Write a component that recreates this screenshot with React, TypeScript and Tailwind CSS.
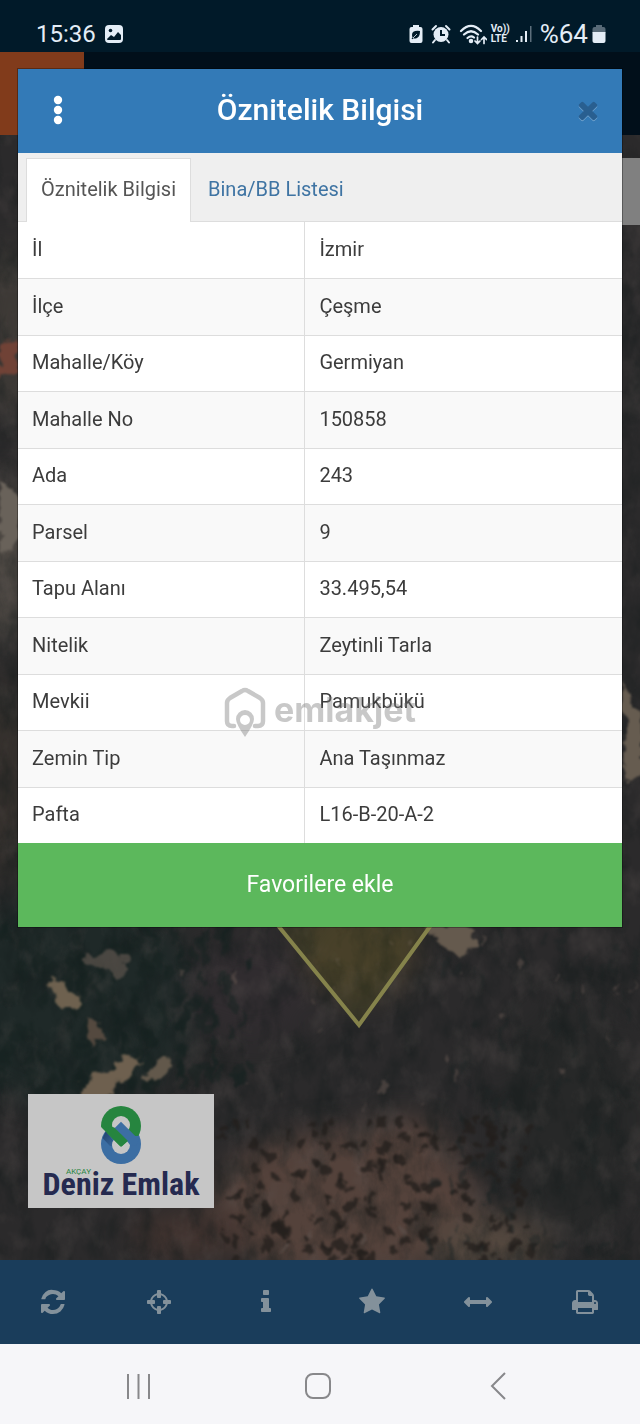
import type { ReactNode } from 'react';

interface Attribute {
  label: string;
  value: string;
}

const attributes: Attribute[] = [
  { label: 'İl', value: 'İzmir' },
  { label: 'İlçe', value: 'Çeşme' },
  { label: 'Mahalle/Köy', value: 'Germiyan' },
  { label: 'Mahalle No', value: '150858' },
  { label: 'Ada', value: '243' },
  { label: 'Parsel', value: '9' },
  { label: 'Tapu Alanı', value: '33.495,54' },
  { label: 'Nitelik', value: 'Zeytinli Tarla' },
  { label: 'Mevkii', value: 'Pamukbükü' },
  { label: 'Zemin Tip', value: 'Ana Taşınmaz' },
  { label: 'Pafta', value: 'L16-B-20-A-2' },
];

const closePath =
  'M1490 1322q0 40-28 68l-136 136q-28 28-68 28t-68-28l-294-294-294 294q-28 28-68 28t-68-28l-136-136q-28-28-28-68t28-68l294-294-294-294q-28-28-28-68t28-68l136-136q28-28 68-28t68 28l294 294 294-294q28-28 68-28t68 28l136 136q28 28 28 68t-28 68l-294 294 294 294q28 28 28 68z';

const tools = [
  {
    name: 'Yenile',
    path: 'M1639 1056q0 5-1 7-64 268-268 434.5T892 1664q-146 0-282.5-55T366 1452l-129 129q-19 19-45 19t-45-19-19-45v-448q0-26 19-45t45-19h448q26 0 45 19t19 45-19 45l-137 137q71 66 161 102t187 36q134 0 250-65t186-179q11-17 53-117 8-23 30-23h192q13 0 22.5 9.5t9.5 22.5zm25-800v448q0 26-19 45t-45 19h-448q-26 0-45-19t-19-45 19-45l138-138q-148-137-349-137-134 0-250 65T461 583q-11 17-53 117-8 23-30 23H179q-13 0-22.5-9.5T147 691v-7q65-268 270-434.5T897 128q146 0 284 55.5T1425 340l130-129q19-19 45-19t45 19 19 45z',
  },
  {
    name: 'Konumum',
    path: 'M1325 1024h-109q-26 0-45-19t-19-45V832q0-26 19-45t45-19h109q-32-108-112.5-188.5T1024 467v109q0 26-19 45t-45 19H832q-26 0-45-19t-19-45V467q-108 32-188.5 112.5T467 768h109q26 0 45 19t19 45v128q0 26-19 45t-45 19H467q32 108 112.5 188.5T768 1325v-109q0-26 19-45t45-19h128q26 0 45 19t19 45v109q108-32 188.5-112.5T1325 1024zm339-192v128q0 26-19 45t-45 19h-143q-37 161-154.5 278.5T1024 1457v143q0 26-19 45t-45 19H832q-26 0-45-19t-19-45v-143q-161-37-278.5-154.5T335 1024H192q-26 0-45-19t-19-45V832q0-26 19-45t45-19h143q37-161 154.5-278.5T768 335V192q0-26 19-45t45-19h128q26 0 45 19t19 45v143q161 37 278.5 154.5T1457 768h143q26 0 45 19t19 45z',
  },
  {
    name: 'Bilgi',
    path: 'M1216 1344v128q0 26-19 45t-45 19H640q-26 0-45-19t-19-45v-128q0-26 19-45t45-19h64V896h-64q-26 0-45-19t-19-45V704q0-26 19-45t45-19h384q26 0 45 19t19 45v576h64q26 0 45 19t19 45zm-128-1152v192q0 26-19 45t-45 19H768q-26 0-45-19t-19-45V192q0-26 19-45t45-19h256q26 0 45 19t19 45z',
  },
  {
    name: 'Favoriler',
    path: 'M1728 647q0 22-26 48l-363 354 86 500q1 7 1 20 0 21-10.5 35.5T1385 1619q-19 0-40-12l-449-236-449 236q-22 12-40 12-21 0-31.5-14.5T365 1569q0-6 2-20l86-500L89 695q-25-27-25-48 0-37 56-46l502-73L847 73q19-41 49-41t49 41l225 455 502 73q56 9 56 46z',
  },
  {
    name: 'Ölç',
    path: 'M1792 896q0 26-19 45l-256 256q-19 19-45 19t-45-19-19-45v-128H384v128q0 26-19 45t-45 19-45-19L19 941Q0 922 0 896t19-45l256-256q19-19 45-19t45 19 19 45v128h1024V640q0-26 19-45t45-19 45 19l256 256q19 19 19 45z',
  },
  {
    name: 'Yazdır',
    path: 'M448 1536h896v-256H448v256zm0-640h896V512h-160q-40 0-68-28t-28-68V256H448v640zm1152 64q0-26-19-45t-45-19-45 19-19 45 19 45 45 19 45-19 19-45zm128 0v416q0 13-9.5 22.5t-22.5 9.5h-224v160q0 40-28 68t-68 28H416q-40 0-68-28t-28-68v-160H96q-13 0-22.5-9.5T64 1376V960q0-79 56.5-135.5T256 768h64V224q0-40 28-68t68-28h672q40 0 88 20t76 48l152 152q28 28 48 76t20 88v256h64q79 0 135.5 56.5T1728 960z',
  },
];

// Small seeded generator so the scrub lands in the same place on every render
function scatter(seed: number, count: number, x: number, y: number, w: number, h: number) {
  let s = seed;
  const next = () => {
    s = (s * 16807) % 2147483647;
    return s / 2147483647;
  };
  next();
  return Array.from({ length: count }, () => ({
    x: x + next() * w,
    y: y + next() * h,
    rx: 1 + next() * 4,
    ry: 1 + next() * 5,
  }));
}

const bushes = scatter(7143, 170, 222, 1115, 310, 150);
const trees = scatter(1951, 170, 0, 925, 250, 170);
const shade = scatter(4377, 90, 430, 925, 210, 335);
const stones = scatter(9241, 40, 170, 930, 470, 320);

function Icon({ path, className }: { path: string; className: string }) {
  return (
    <svg viewBox="0 0 1792 1792" className={className} fill="currentColor" aria-hidden="true">
      <path d={path} />
    </svg>
  );
}

function SatelliteMap() {
  return (
    <svg
      className="absolute inset-0 h-full w-full"
      viewBox="0 52 640 1208"
      preserveAspectRatio="xMidYMid slice"
      aria-hidden="true"
    >
      <defs>
        <filter id="rough" x="-10%" y="-10%" width="120%" height="120%" colorInterpolationFilters="sRGB">
          <feTurbulence type="fractalNoise" baseFrequency="0.06" numOctaves="4" seed="8" />
          <feDisplacementMap in="SourceGraphic" scale="18" xChannelSelector="R" yChannelSelector="G" />
          <feGaussianBlur stdDeviation="1" />
        </filter>
        <filter id="soft" x="-30%" y="-30%" width="160%" height="160%" colorInterpolationFilters="sRGB">
          <feGaussianBlur stdDeviation="14" />
        </filter>
        <filter id="grain" x="0" y="0" width="100%" height="100%" colorInterpolationFilters="sRGB">
          <feTurbulence type="fractalNoise" baseFrequency="0.04 0.028" numOctaves="5" seed="5" />
          <feColorMatrix values="0 0 0 0 0.36  0 0 0 0 0.33  0 0 0 0 0.32  1.6 0 0 0 -0.78" />
        </filter>
        <filter id="dark" x="0" y="0" width="100%" height="100%" colorInterpolationFilters="sRGB">
          <feTurbulence type="fractalNoise" baseFrequency="0.045 0.025" numOctaves="5" seed="14" />
          <feColorMatrix values="0 0 0 0 0.07  0 0 0 0 0.1  0 0 0 0 0.1  0 2.4 0 0 -1" />
        </filter>
      </defs>

      <rect x="0" y="52" width="640" height="1208" fill="#2b2a2b" />
      <g filter="url(#soft)">
        <ellipse cx="70" cy="1000" rx="130" ry="110" fill="#1f2928" />
        <ellipse cx="250" cy="990" rx="70" ry="50" fill="#302c2f" />
        <ellipse cx="360" cy="950" rx="60" ry="50" fill="#40382c" />
        <ellipse cx="345" cy="1205" rx="135" ry="75" fill="#54423b" />
        <ellipse cx="400" cy="1150" rx="50" ry="32" fill="#54423b" />
        <ellipse cx="190" cy="1235" rx="60" ry="25" fill="#41332f" />
        <ellipse cx="490" cy="1245" rx="60" ry="30" fill="#54483f" />
        <ellipse cx="570" cy="1120" rx="70" ry="120" fill="#272828" />
        <ellipse cx="10" cy="330" rx="25" ry="90" fill="#3f3b37" />
        <ellipse cx="5" cy="560" rx="20" ry="90" fill="#544e48" />
        <ellipse cx="5" cy="780" rx="22" ry="110" fill="#36312d" />
      </g>

      <rect x="0" y="52" width="640" height="1208" filter="url(#dark)" opacity="0.45" />
      <rect x="0" y="52" width="640" height="1208" filter="url(#grain)" opacity="0.45" />

      <g filter="url(#rough)">
        {trees.map((t, i) => (
          <ellipse key={i} cx={t.x} cy={t.y} rx={t.rx + 1} ry={t.ry + 5} fill="#15211f" opacity="0.5" />
        ))}
        <path d="M80 1090l12-16 20-4 12-14 20 4-10 14-18 8-2 14-18 6-16-8z" fill="#6e604f" />
        <path d="M144 1076l22-18 8 6-20 18z" fill="#62584b" />
        <path d="M48 982l18 2 4 12 12 4-2 8-18-2-8-12z" fill="#6e614f" />
        <path d="M84 952l18 4 6-6 18 8 2 18-10 4-12-10-18-6z" fill="#554f48" opacity="0.8" />
        <path d="M84 1018l16 4 4 18-14 4z" fill="#54493f" />
        <path d="M160 1108l10-14 20 8 2 18-18 8z" fill="#5d493e" />
        <path d="M428 926h46v20l-14 10-22-10z" fill="#655a4e" />
        <path d="M0 346l18-6v28l-20 14z" fill="#704236" />
        <path d="M0 480l20 14v44l-20 16z" fill="#69625a" />
        <path d="M622 680l8 20 14 14v60l-20 10z" fill="#665c50" />
        {bushes.map((b, i) => (
          <ellipse key={i} cx={b.x} cy={b.y} rx={b.rx + 1} ry={b.ry + 1} fill="#231f1c" opacity="0.75" />
        ))}
        {shade.map((b, i) => (
          <ellipse key={i} cx={b.x} cy={b.y} rx={b.rx} ry={b.ry * 2} fill="#1c2323" opacity="0.45" />
        ))}
        {stones.map((b, i) => (
          <ellipse key={i} cx={b.x} cy={b.y} rx={b.rx / 2} ry={b.ry} fill="#5c504b" opacity="0.6" />
        ))}
      </g>

      {/* Parcel outline */}
      <path
        d="M258 898L280 928L359 1025L452 896"
        fill="#6b641f"
        fillOpacity="0.2"
        stroke="#85834b"
        strokeWidth="4"
      />

      {/* App bar and map control behind the dialog */}
      <rect x="0" y="52" width="640" height="83" fill="#010f1a" />
      <rect x="0" y="52" width="84" height="83" fill="#813b1b" />
      <rect x="600" y="158" width="40" height="67" fill="#808080" />
    </svg>
  );
}

function StatusBar() {
  return (
    <header className="flex h-[52px] items-center justify-between bg-[#011a29] pt-4 pr-[34px] pl-9 text-[#e4edf6]">
      <div className="flex items-center gap-2">
        <span className="text-2xl">15:36</span>
        <svg viewBox="0 0 20 20" className="size-5" aria-hidden="true">
          <rect x="1" y="1" width="18" height="18" rx="4" fill="currentColor" />
          <circle cx="6.5" cy="6.5" r="1.8" fill="#011a29" />
          <path d="M3 15l4-4 3 2 4-5 3 3v4q0 1-1 1H4q-1 0-1-1z" fill="#011a29" />
        </svg>
      </div>

      <div className="flex items-center gap-2">
        <svg viewBox="0 0 14 20" className="h-5 w-3.5" aria-hidden="true">
          <path d="M4 1h6v2h1.500q2 0 2 2v12q0 2-2 2h-9q-2 0-2-2V5q0-2 2-2H4z" fill="currentColor" />
          <path d="M11 7q-8-1-8 4 0 1.500.6 2.400L2.500 14.500 3.500 15.300 4.600 14.200Q6 15 8 14q3-1.500 3-7z" fill="#011a29" />
          <path d="M4 14l4-4" stroke="currentColor" strokeWidth="0.8" />
        </svg>
        <svg viewBox="0 0 20 20" className="size-5" aria-hidden="true">
          <circle cx="10" cy="10.500" r="7.500" fill="currentColor" />
          <path d="M1.500 5.500L5 2M18.500 5.500L15 2M4 16l-2 2.500M16 16l2 2.500" stroke="currentColor" strokeWidth="2" strokeLinecap="round" />
          <path d="M10 6v5h4" stroke="#011a29" strokeWidth="2" fill="none" />
        </svg>
        <svg viewBox="0 0 28 21" className="h-[21px] w-7" fill="none" stroke="currentColor" strokeWidth="2.2" strokeLinecap="round" aria-hidden="true">
          <path d="M2 7Q12-3 22 7M5 10.500Q12 4 19 10.500M8.500 14Q12 11 15 13.500" />
          <circle cx="12" cy="17" r="1.200" fill="currentColor" />
          <path d="M18.500 13v6M16 17l2.500 2.500L21 17M25 19.500v-6M22.500 15.500l2.500-2.500 2.500 2.500" strokeWidth="1.700" />
        </svg>
        <div className="flex items-center gap-1.5">
          <span className="-ml-1 flex flex-col text-[10px] leading-[10px] font-bold">
            <span>Vo))</span>
            <span>LTE</span>
          </span>
          <svg viewBox="0 0 16 18" className="h-[18px] w-4" aria-hidden="true">
            <path d="M0 15h2v2H0zM4.500 11h2v6h-2zM9 6h2v11H9z" fill="currentColor" />
            <path d="M14 1h1.500v16H14z" fill="#5d6f7c" />
          </svg>
        </div>
        <span className="flex items-center gap-1 text-[26px]">
          %64
          <svg viewBox="0 0 14 20" className="h-5 w-3.5" aria-hidden="true">
            <path d="M4 1h6v2h1.500q2 0 2 2v4h-13V5q0-2 2-2H4z" fill="#586a77" />
            <path d="M.5 8h13v9q0 2-2 2h-9q-2 0-2-2z" fill="currentColor" />
          </svg>
        </span>
      </div>
    </header>
  );
}

function Watermark() {
  return (
    <div className="pointer-events-none absolute inset-x-0 bottom-[190px] flex items-center justify-center gap-2 text-[#777777] opacity-40">
      <svg viewBox="0 0 42 50" className="h-[50px] w-[42px]" fill="none" aria-hidden="true">
        <path
          d="M10 39H8q-5 0-5-5V16q0-3 3-5L18 4q3-2 6 0l12 7q3 2 3 5v18q0 5-5 5h-3"
          stroke="currentColor"
          strokeWidth="4.500"
          strokeLinecap="round"
        />
        <path
          fillRule="evenodd"
          d="M21 23a9 9 0 0 1 9 9q0 5-9 18q-9-13-9-18a9 9 0 0 1 9-9zm0 5a5 5 0 1 0 0 10a5 5 0 0 0 0-10z"
          fill="currentColor"
        />
      </svg>
      <span className="pb-1 font-['Inter',sans-serif] text-[34px] leading-10 font-bold">emlakjet</span>
    </div>
  );
}

function AttributeDialog() {
  return (
    <section
      role="dialog"
      aria-labelledby="dialog-title"
      className="relative mx-[18px] bg-white shadow-[0_0_0_1px_rgba(0,0,0,0.3)]"
    >
      <div className="flex h-[84px] items-center justify-between bg-[#337ab7] px-5 pb-0.5 text-white">
        <button type="button" aria-label="Menü" className="flex size-10 items-center justify-center">
          <svg viewBox="0 0 10 30" className="h-[30px] w-2.5" fill="currentColor" aria-hidden="true">
            <circle cx="5" cy="5" r="4.200" />
            <circle cx="5" cy="15" r="4.200" />
            <circle cx="5" cy="25" r="4.200" />
          </svg>
        </button>
        <h1 id="dialog-title" className="text-[30px] leading-9 font-medium">
          Öznitelik Bilgisi
        </h1>
        <button
          type="button"
          aria-label="Kapat"
          className="flex w-10 items-center justify-end text-[#295f90] drop-shadow-[0_1px_0_rgba(255,255,255,0.3)]"
        >
          <Icon path={closePath} className="size-7" />
        </button>
      </div>

      <div role="tablist" className="flex h-[69px] items-end border-b border-[#dddddd] bg-[#efefef] px-2 text-xl">
        <button
          type="button"
          role="tab"
          aria-selected="true"
          className="-mb-px h-16 border border-b-0 border-[#dddddd] bg-white px-3.5 pb-1 text-[#555555]"
        >
          Öznitelik Bilgisi
        </button>
        <button
          type="button"
          role="tab"
          aria-selected="false"
          className="-mb-px h-16 border border-b-0 border-transparent px-4 pb-1 text-[#3f74a3]"
        >
          Bina/BB Listesi
        </button>
      </div>

      <table className="w-full table-fixed border-collapse text-xl text-[#3c3c3c]">
        <colgroup>
          <col className="w-[47.5%]" />
          <col />
        </colgroup>
        <tbody>
          {attributes.map((item) => (
            <tr key={item.label} className="h-14 border-b border-[#dddddd] last:border-b-0 even:h-[57px] even:bg-[#f9f9f9]">
              <th scope="row" className="border-r border-[#dddddd] px-3.5 pb-0.5 text-left font-normal">
                {item.label}
              </th>
              <td className="px-3.5 pb-0.5">{item.value}</td>
            </tr>
          ))}
        </tbody>
      </table>

      <button type="button" className="block h-[84px] w-full bg-[#5cb85c] text-[23px] text-white">
        Favorilere ekle
      </button>
      <Watermark />
    </section>
  );
}

function AgencyLogo() {
  return (
    <div className="relative mt-[167px] mb-[52px] ml-7 flex h-[114px] w-[186px] flex-col items-center bg-[#c6c6c6] pt-3">
      <svg viewBox="0 0 42 58" className="h-[58px] w-[42px]" aria-hidden="true">
        <defs>
          <clipPath id="upper-ring">
            <path d="M0 0h42v30H32L21 41L0 20z" />
          </clipPath>
          <linearGradient id="fold" x1="0" y1="0" x2="1" y2="1">
            <stop offset="0" stopColor="#1f3f6b" />
            <stop offset="1" stopColor="#3c6ea3" />
          </linearGradient>
        </defs>
        <circle cx="21" cy="38" r="20" fill="#3c6ea3" />
        <path d="M6 25L2.500 32L10 40L18 41z" fill="url(#fold)" />
        <circle cx="21" cy="39" r="9" fill="#c6c6c6" />
        <circle cx="21" cy="20" r="20" fill="#26853f" clipPath="url(#upper-ring)" />
        <circle cx="21" cy="19" r="9" fill="#c6c6c6" />
        <path d="M21 15.700L39 33.700L36 40L30 39L27 35L14.500 22.200z" fill="#3c6ea3" />
        <path d="M7 27L21 41L28 35L14.300 21.500L9 20z" fill="#26853f" />
      </svg>
      <span className="absolute top-[73px] left-[38px] text-[8px] leading-[10px] text-[#26853f]">AKÇAY</span>
      <span className="font-['Roboto_Condensed','Liberation_Sans_Narrow',sans-serif] text-[32px] leading-10 font-bold whitespace-nowrap text-[#252a50]">
        Deniz Emlak
      </span>
    </div>
  );
}

function NavButton({ label, children }: { label: string; children: ReactNode }) {
  return (
    <button type="button" aria-label={label} className="flex flex-1 items-center justify-center">
      <svg viewBox="0 0 30 30" className="size-[30px]" fill="none" stroke="currentColor" strokeWidth="2" aria-hidden="true">
        {children}
      </svg>
    </button>
  );
}

export default function App() {
  return (
    <div className="flex min-h-screen flex-col font-['Roboto',sans-serif]">
      <StatusBar />

      <main className="relative flex-1 overflow-hidden pt-[17px]">
        <SatelliteMap />
        <AttributeDialog />
        <AgencyLogo />
      </main>

      <nav className="flex h-[84px] items-center bg-[#1a3d5b] pr-0.5 text-[#83919b]">
        {tools.map((tool) => (
          <button key={tool.name} type="button" aria-label={tool.name} className="flex flex-1 justify-center">
            <Icon path={tool.path} className="size-7" />
          </button>
        ))}
      </nav>

      <footer className="flex h-20 items-center bg-[#f6f6f9] pt-1 pr-[52px] pl-12 text-[#88888b]">
        <NavButton label="Son uygulamalar">
          <path d="M5 3v25M15.500 3v25M26 3v25" />
        </NavButton>
        <NavButton label="Ana ekran">
          <rect x="3" y="3" width="24" height="24" rx="7" />
        </NavButton>
        <NavButton label="Geri">
          <path d="M22 2L9 15l13 13" />
        </NavButton>
      </footer>
    </div>
  );
}
